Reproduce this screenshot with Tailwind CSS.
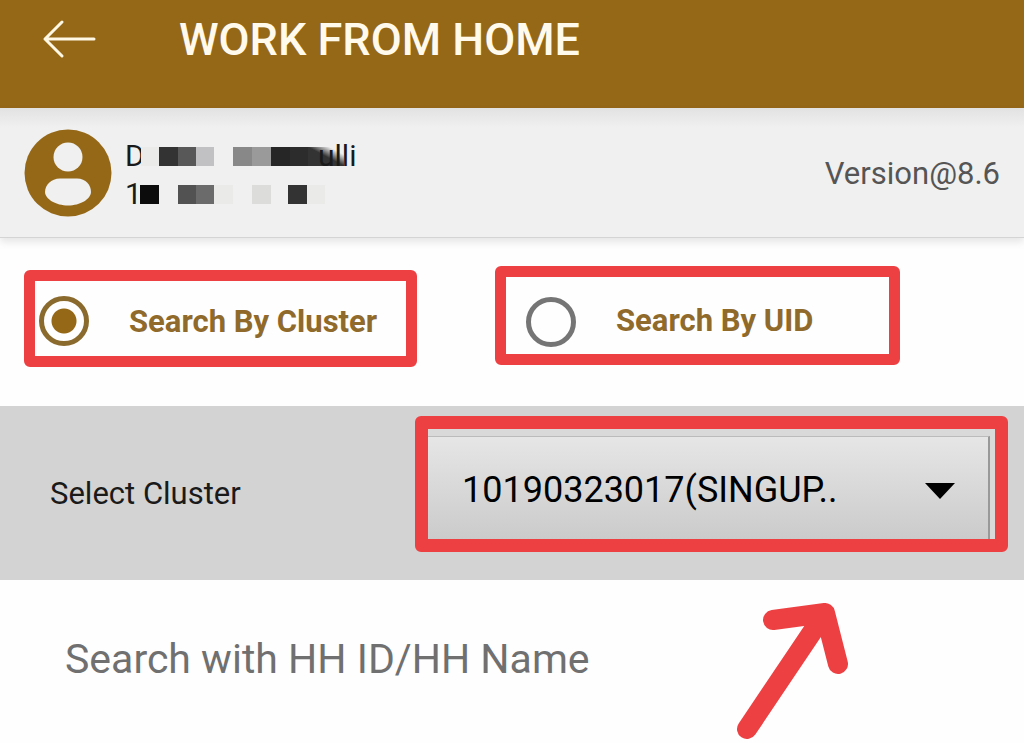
<!DOCTYPE html>
<html lang="en">
<head>
    <meta charset="UTF-8">
    <meta name="viewport" content="width=device-width, initial-scale=1.0">
    <title>Work From Home</title>
    <script src="https://cdn.jsdelivr.net/npm/@tailwindcss/browser@4"></script>
</head>
<body class="min-h-screen overflow-x-hidden bg-[#fefefe] font-['Roboto',sans-serif] text-black">
    <header class="flex h-[108px] items-start bg-[#956818] pl-10 pt-3">
        <button type="button" aria-label="Back" class="mt-1 flex-none">
            <svg class="h-12 w-16" viewBox="0 0 64 48" fill="none" stroke="#fff8e4" stroke-width="3" stroke-linecap="round" stroke-linejoin="round">
                <path d="M54 23H5M22 6L5 23L22 40"/>
            </svg>
        </button>
        <h1 class="ml-[75px] text-[45px] leading-14 font-medium text-[#fffaec]">WORK FROM HOME</h1>
    </header>

    <section class="relative flex h-[130px] items-center justify-between border-b border-[#d4d4d4] bg-gradient-to-b from-[#e2e2e2] via-[#f0f0f0] via-15% to-[#f0f0f0] px-6 shadow-[0_4px_8px_rgba(0,0,0,0.10)]">
        <div class="flex items-center gap-[13px]">
            <svg class="h-[88px] w-[88px]" viewBox="0 0 88 88">
                <circle cx="44" cy="44" r="43.5" fill="#956818"/>
                <circle cx="44" cy="28" r="14.5" fill="#f0f0f0"/>
                <path d="M36 49.500H53C62 49.500 67 56 67 63C67 70 56 76.500 44 76.500C32 76.500 21 70 21 63C21 56 27 49.500 36 49.500Z" fill="#f0f0f0"/>
            </svg>
            <div class="pt-1 text-[30px] leading-[38px] text-[#1a1a1a]">
                <p class="flex items-center">
                    <span class="w-4">D</span>
                    <svg class="h-5 w-[177px] overflow-visible" viewBox="0 0 177 20">
                        <defs>
                            <linearGradient id="fade" x1="0" y1="1" x2="1" y2="0">
                                <stop offset="0.5" stop-color="#333"/>
                                <stop offset="0.8" stop-color="#333" stop-opacity="0"/>
                            </linearGradient>
                        </defs>
                        <path fill="#ebebea" d="M0 1h18v19H0z"/>
                        <path fill="#333" d="M18 1h19v19H18z"/>
                        <path fill="#585858" d="M37 1h18v19H37z"/>
                        <path fill="#c1c1c3" d="M55 1h18v19H55z"/>
                        <path fill="#888" d="M92 1h19v19H92z"/>
                        <path fill="#9a9a9a" d="M111 1h19v19H111z"/>
                        <path fill="#262626" d="M130 1h19v19H130z"/>
                        <path fill="#2c2c2c" d="M149 1h18v19H149z"/>
                        <path fill="url(#fade)" d="M167 1h36v19H167z"/>
                    </svg>
                    <span>ulli</span>
                </p>
                <p class="flex items-center">
                    <span class="w-[15px]">1</span>
                    <svg class="h-5 w-[186px]" viewBox="0 0 186 20">
                        <path fill="#0c0c0c" d="M0 1h19v19H0z"/>
                        <path fill="#525252" d="M38 1h18v19H38z"/>
                        <path fill="#6b6b6b" d="M56 1h18v19H56z"/>
                        <path fill="#eaeae8" d="M74 1h19v19H74z"/>
                        <path fill="#dcdcda" d="M112 1h19v19H112z"/>
                        <path fill="#333" d="M148 1h19v19H148z"/>
                        <path fill="#eaeae8" d="M167 1h18v19H167z"/>
                    </svg>
                </p>
            </div>
        </div>
        <p class="pt-1 text-[31px] text-[#555]">Version@8.6</p>
    </section>

    <main>
        <div class="grid h-[168px] grid-cols-[393fr_405fr] items-start gap-[78px] pl-6 pr-[124px] pt-7 text-[31px] font-bold text-[#8f6a2b]">
            <label class="mt-1 flex h-[97px] items-center gap-10 rounded-md border-[11px] border-[#ed4043] pl-1 pt-1">
                <input type="radio" name="mode" value="cluster" checked class="m-0 h-[50px] w-[50px] flex-none appearance-none rounded-full border-[5px] border-[#757575] checked:border-[#8b6a2d] checked:bg-[radial-gradient(circle,#956818_12px,transparent_13px)]">
                <span class="pt-1">Search By Cluster</span>
            </label>
            <label class="flex h-[99px] items-center gap-10 rounded-md border-[11px] border-[#ed4043] pl-5 pt-3">
                <input type="radio" name="mode" value="uid" class="m-0 h-[50px] w-[50px] flex-none appearance-none rounded-full border-[5px] border-[#757575] checked:border-[#8b6a2d] checked:bg-[radial-gradient(circle,#956818_12px,transparent_13px)]">
                <span>Search By UID</span>
            </label>
        </div>

        <div class="flex h-[174px] items-start bg-[#d3d3d3] pl-[50px] pr-4 pt-[10px]">
            <label for="cluster" class="w-[365px] flex-none pt-[54px] text-[31px] leading-12 text-[#1a1a1a]">Select Cluster</label>
            <div class="relative flex h-[136px] min-w-0 grow rounded-md border-[13px] border-[#ed4043] bg-[#d9d9d9] pr-[5px] pt-[7px]">
                <select id="cluster" class="h-full w-full appearance-none border-t border-r-2 border-t-[#bbb] border-r-[#999] bg-gradient-to-b from-[#e6e6e6] to-[#cbcbcb] pl-[34px] pt-1 text-[36px] text-black">
                    <option>10190323017(SINGUP..</option>
                </select>
                <svg class="pointer-events-none absolute right-10 top-[54px] h-4 w-[30px]" viewBox="0 0 30 16">
                    <path d="M0 0H30L15 16Z"/>
                </svg>
            </div>
        </div>

        <div class="relative h-[163px] px-[65px] pt-[50px]">
            <input type="text" aria-label="Search" placeholder="Search with HH ID/HH Name" class="h-[60px] w-[600px] bg-transparent text-[41px] text-[#707070] outline-none placeholder:text-[#707070]">
            <!-- pointer to the cluster list -->
            <svg class="pointer-events-none absolute right-[170px] top-5 h-[143px] w-[120px]" viewBox="0 0 120 143" fill="none" stroke="#ed4043" stroke-width="20" stroke-linecap="round" stroke-linejoin="round">
                <path d="M13 129L91 13M39 20L91 13L104 64"/>
            </svg>
        </div>
    </main>
</body>
</html>
